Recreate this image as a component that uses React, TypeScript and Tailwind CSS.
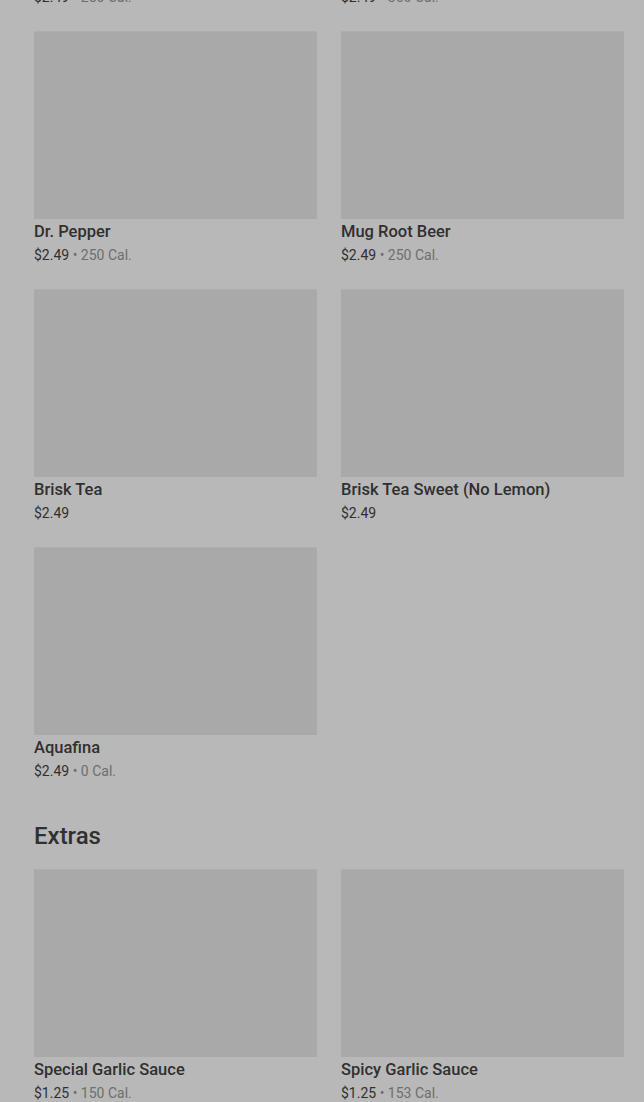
const drinks = [
  { name: "Coca-Cola", price: "$2.49", cal: "250 Cal." },
  { name: "Sprite", price: "$2.49", cal: "360 Cal." },
  { name: "Dr. Pepper", price: "$2.49", cal: "250 Cal." },
  { name: "Mug Root Beer", price: "$2.49", cal: "250 Cal." },
  { name: "Brisk Tea", price: "$2.49" },
  { name: "Brisk Tea Sweet (No Lemon)", price: "$2.49" },
  { name: "Aquafina", price: "$2.49", cal: "0 Cal." },
];

const extras = [
  { name: "Special Garlic Sauce", price: "$1.25", cal: "150 Cal." },
  { name: "Spicy Garlic Sauce", price: "$1.25", cal: "153 Cal." },
];

type Item = { name: string; price: string; cal?: string };

function ItemCard({ item }: { item: Item }) {
  return (
    <div className="flex flex-col">
      <div className="h-[188px] bg-[#a9a9a9] border-t border-[#aeaeae]" />
      <div className="mt-[3px] text-[16.5px] leading-5 font-medium text-[#303030]">{item.name}</div>
      <div className="mt-1 text-[14px] leading-[19px] text-[#303030]">
        {item.price}
        {item.cal && <span className="text-[#6e6e6e]"> • {item.cal}</span>}
      </div>
    </div>
  );
}

export default function App() {
  return (
    <main
      className="h-[1102px] overflow-hidden bg-[#b8b8b8] pl-[34px] pr-[20px]"
      style={{ fontFamily: "Roboto, 'Noto Sans', sans-serif" }}
    >
      <div className="-mt-[227px] grid grid-cols-2 gap-x-6 gap-y-6">
        {drinks.map((d) => (
          <ItemCard key={d.name} item={d} />
        ))}
      </div>
      <h2 className="mt-[39px] text-[24px] leading-8 font-medium text-[#303030]">Extras</h2>
      <div className="mt-[17px] grid grid-cols-2 gap-x-6 gap-y-6">
        {extras.map((d) => (
          <ItemCard key={d.name} item={d} />
        ))}
      </div>
    </main>
  );
}
